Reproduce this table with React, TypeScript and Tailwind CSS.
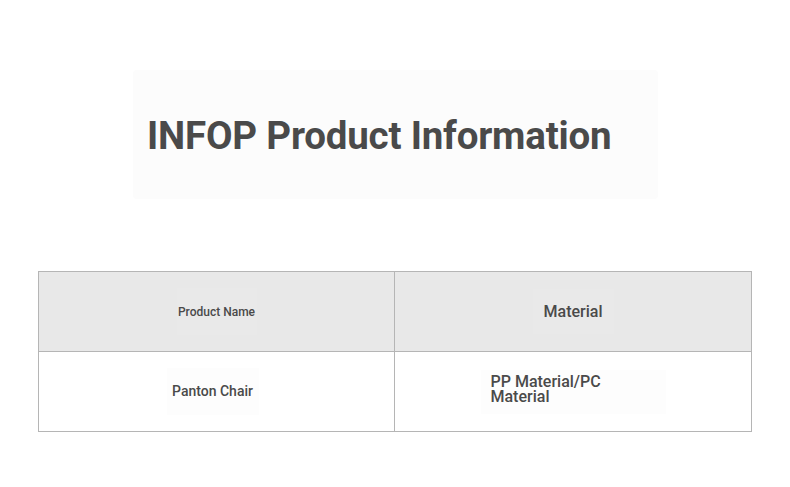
export default function App() {
  return (
    <div className="w-[790px] h-[487px] bg-white flex flex-col" style={{ fontFamily: "Roboto, 'Liberation Sans', sans-serif" }}>
      <div className="pt-[70px] pl-[133px]">
        <div className="w-[525px] h-[129px] bg-[#fcfcfc] rounded-[4px] flex items-center pl-[14px] pt-[3px]">
          <h1 className="text-[38.5px] font-bold text-[#4a4a4a] leading-none tracking-[-0.2px]">INFOP Product Information</h1>
        </div>
      </div>
      <div className="pt-[72px] pl-[38px]">
        <div className="w-[714px] border border-[#b5b5b5] grid grid-cols-2">
          <div className="h-[80px] bg-[#e8e8e8] border-r border-b border-[#b5b5b5] flex items-center justify-center">
            <div className="w-[80px] h-[47px] bg-[#e9e9e9] flex items-center justify-center text-[12px] text-[#4a4a4a] font-medium">Product Name</div>
          </div>
          <div className="h-[80px] bg-[#e8e8e8] border-b border-[#b5b5b5] flex items-center justify-center">
            <div className="w-[81px] h-[45px] bg-[#e9e9e9] flex items-center justify-center text-[16px] text-[#4a4a4a] font-medium">Material</div>
          </div>
          <div className="h-[79px] border-r border-[#b5b5b5] flex items-center justify-center pr-[8px]">
            <div className="w-[92px] h-[47px] bg-[#fdfdfd] flex items-center justify-center text-[14px] text-[#4a4a4a] font-medium">Panton Chair</div>
          </div>
          <div className="h-[79px] flex items-center justify-center">
            <div className="w-[185px] h-[44px] bg-[#fdfdfd] flex items-center pl-[10px] pb-[6px] text-[16px] leading-[15px] text-[#4a4a4a] font-medium">
              <span>PP Material/PC<br />Material</span>
            </div>
          </div>
        </div>
      </div>
    </div>
  );
}
